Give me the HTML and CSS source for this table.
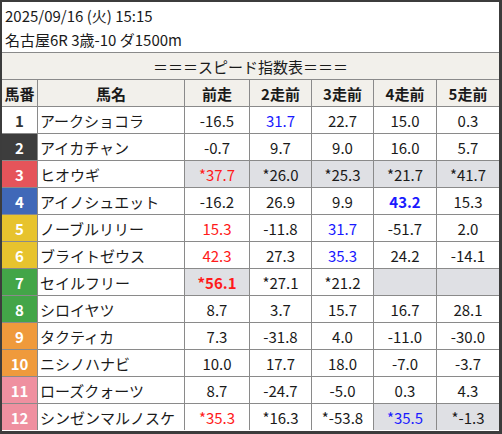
FILE: index.html
```html
<!DOCTYPE html>
<html lang="ja">
<head>
<meta charset="utf-8">
<link rel="stylesheet" href="styles.css">
</head>
<body>
<div class="frame">
  <div class="info">
    <div>2025/09/16 (火) 15:15</div>
    <div>名古屋6R 3歳-10 ダ1500m</div>
  </div>
  <div class="grid">
    <div class="title">＝＝＝スピード指数表＝＝＝</div>
    <div class="th">馬番</div><div class="th">馬名</div><div class="th">前走</div><div class="th">2走前</div><div class="th">3走前</div><div class="th">4走前</div><div class="th">5走前</div>

    <div class="waku w1">1</div><div class="name">アークショコラ</div><div class="num">-16.5</div><div class="num blue">31.7</div><div class="num">22.7</div><div class="num">15.0</div><div class="num">0.3</div>
    <div class="waku w2">2</div><div class="name">アイカチャン</div><div class="num">-0.7</div><div class="num">9.7</div><div class="num">9.0</div><div class="num">16.0</div><div class="num">5.7</div>
    <div class="waku w3">3</div><div class="name">ヒオウギ</div><div class="num hl red">*37.7</div><div class="num hl">*26.0</div><div class="num hl">*25.3</div><div class="num hl">*21.7</div><div class="num hl">*41.7</div>
    <div class="waku w4">4</div><div class="name">アイノシュエット</div><div class="num">-16.2</div><div class="num">26.9</div><div class="num">9.9</div><div class="num blue bold">43.2</div><div class="num">15.3</div>
    <div class="waku w5">5</div><div class="name">ノーブルリリー</div><div class="num red">15.3</div><div class="num">-11.8</div><div class="num blue">31.7</div><div class="num">-51.7</div><div class="num">2.0</div>
    <div class="waku w5">6</div><div class="name">ブライトゼウス</div><div class="num red">42.3</div><div class="num">27.3</div><div class="num blue">35.3</div><div class="num">24.2</div><div class="num">-14.1</div>
    <div class="waku w6">7</div><div class="name">セイルフリー</div><div class="num hl red bold">*56.1</div><div class="num">*27.1</div><div class="num">*21.2</div><div class="num hl"></div><div class="num hl"></div>
    <div class="waku w6">8</div><div class="name">シロイヤツ</div><div class="num">8.7</div><div class="num">3.7</div><div class="num">15.7</div><div class="num">16.7</div><div class="num">28.1</div>
    <div class="waku w7">9</div><div class="name">タクティカ</div><div class="num">7.3</div><div class="num">-31.8</div><div class="num">4.0</div><div class="num">-11.0</div><div class="num">-30.0</div>
    <div class="waku w7">10</div><div class="name">ニシノハナビ</div><div class="num">10.0</div><div class="num">17.7</div><div class="num">18.0</div><div class="num">-7.0</div><div class="num">-3.7</div>
    <div class="waku w8">11</div><div class="name">ローズクォーツ</div><div class="num">8.7</div><div class="num">-24.7</div><div class="num">-5.0</div><div class="num">0.3</div><div class="num">4.3</div>
    <div class="waku w8">12</div><div class="name">シンゼンマルノスケ</div><div class="num red">*35.3</div><div class="num">*16.3</div><div class="num">*-53.8</div><div class="num hl blue">*35.5</div><div class="num hl">*-1.3</div>
  </div>
</div>
</body>
</html>
```

FILE: styles.css
```css
html, body {
  margin: 0;
  padding: 0;
  background: #ffffff;
}
body {
  font-family: "Noto Sans CJK JP", "Noto Sans", sans-serif;
  font-size: 15px;
  color: #1a1a1a;
}
.frame {
  width: 502px;
  height: 434px;
  box-sizing: border-box;
  border-style: solid;
  border-color: #3c3c3c;
  border-width: 2px 3px 3px 2px;
  overflow: hidden;
}
.info {
  height: 51px;
  box-sizing: border-box;
  padding: 2px 0 0 3px;
  line-height: 24px;
  border-bottom: 1px solid #8a8a8a;
  background: #ffffff;
}
.grid {
  display: grid;
  grid-template-columns: 35px 146px 64px 61px 61px 62px 62px;
  grid-auto-rows: 26px;
  gap: 1px;
  background: #8a8a8a;
}
.grid > div {
  display: flex;
  align-items: center;
  justify-content: center;
  background: #ffffff;
  white-space: nowrap;
  overflow: hidden;
}
.grid > .title {
  grid-column: 1 / -1;
  background: #f2f0eb;
}
.grid > .th {
  background: #f2f0eb;
  font-weight: bold;
}
.grid > .name {
  justify-content: flex-start;
  padding-left: 2px;
}
.grid > .waku {
  font-weight: bold;
  color: #ffffff;
}
.grid > .w1 { background: #ffffff; color: #333333; }
.grid > .w2 { background: #3d3d3d; }
.grid > .w3 { background: #e5545a; }
.grid > .w4 { background: #4068b8; }
.grid > .w5 { background: #e7c32e; }
.grid > .w6 { background: #43a548; }
.grid > .w7 { background: #ef9a3c; }
.grid > .w8 { background: #ef90a0; }
.grid > .hl { background: #dfe0e4; }
.red { color: #ff1a1a; }
.blue { color: #1a1aff; }
.bold { font-weight: bold; }
```
